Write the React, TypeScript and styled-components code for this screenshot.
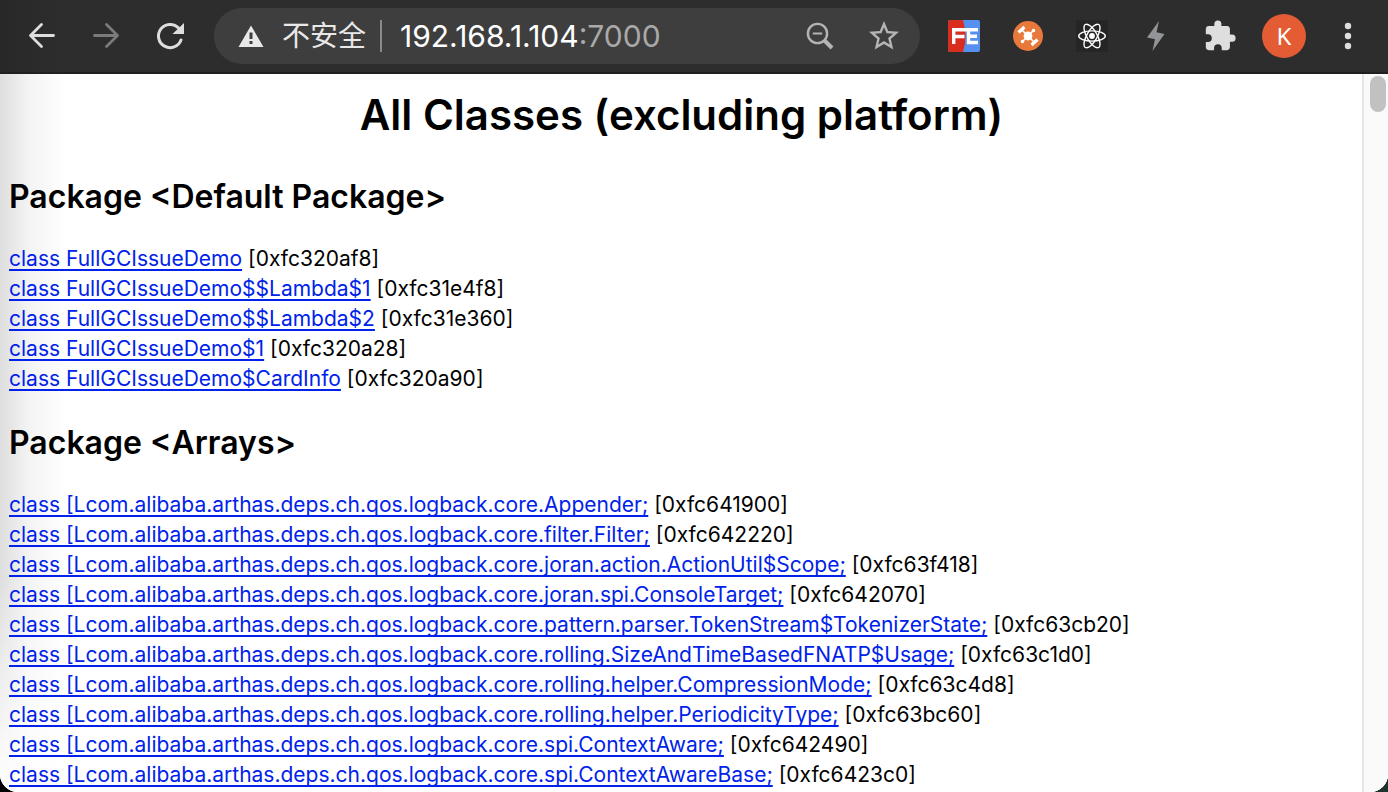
import React from "react";
import styled, { createGlobalStyle } from "styled-components";

const GlobalStyle = createGlobalStyle`
  *, *::before, *::after { box-sizing: border-box; }
  body {
    margin: 0;
    background: linear-gradient(to right, #000 50%, #1f332d 50%);
    font-family: Inter, "Noto Sans CJK SC", sans-serif;
  }
`;

const Window = styled.div`
  display: flex;
  flex-direction: column;
  height: 100vh;
  overflow: hidden;
  border-radius: 0 0 18px 18px;
  background: #fff;
`;

const Toolbar = styled.header`
  display: flex;
  align-items: center;
  flex: none;
  height: 74px;
  padding: 0 8px 0 10px;
  background: linear-gradient(to right, #282828, #2d2d2d 60px);
  border-bottom: 2px solid #202022;
`;

const IconButton = styled.button`
  display: flex;
  align-items: center;
  justify-content: center;
  flex: none;
  width: 64px;
  height: 56px;
  padding: 0;
  border: 0;
  background: none;
  color: ${(p) => p.color ?? "#dedede"};
  svg { display: block; }
`;

const AddressBar = styled.div`
  display: flex;
  align-items: center;
  flex: 1;
  min-width: 0;
  height: 56px;
  margin: 0 12px;
  padding: 0 4px 0 24px;
  border-radius: 28px;
  background: #3e3e3e;
  font-size: 28px;
  line-height: 40px;
  white-space: nowrap;
  color: #e8e8e8;
`;

const Security = styled.button`
  display: flex;
  align-items: center;
  gap: 18px;
  padding: 0;
  border: 0;
  background: none;
  color: inherit;
  font: inherit;
`;

const Divider = styled.span`
  width: 2px;
  height: 32px;
  margin: 0 18px 0 14px;
  background: #8a8a8a;
`;

const Url = styled.div`
  flex: 1;
  min-width: 0;
  overflow: hidden;
  font-size: 30px;
  color: #fff;
`;

const Port = styled.span`
  color: #a9a9a9;
`;

const Avatar = styled.span`
  display: flex;
  align-items: center;
  justify-content: center;
  width: 44px;
  height: 44px;
  border-radius: 50%;
  background: #e45c33;
  color: #fff;
  font: 24px/44px "Noto Sans", sans-serif;
`;

const Viewport = styled.div`
  display: flex;
  flex: 1;
  min-height: 0;
  background:
    linear-gradient(to bottom, transparent 70%, #fff),
    linear-gradient(to right, #dedede, #f3f3f3 28px, #fff 66px);
`;

const Page = styled.main`
  flex: 1;
  min-width: 0;
  overflow: hidden;
  padding: 10px 8px 0 9px;
  color: #000;
`;

const Title = styled.h1`
  margin: 0;
  font-size: 42px;
  font-weight: 600;
  line-height: 62px;
  padding-bottom: 2px;
  text-align: center;
`;

const PackageName = styled.h2`
  margin: 0;
  padding: 28px 0 26px;
  font-size: 32px;
  font-weight: 600;
  line-height: 42px;
`;

const ClassList = styled.ul`
  margin: 0;
  padding: 0;
  list-style: none;
  font-size: 21px;
  line-height: 30px;
  white-space: nowrap;
`;

const ClassLink = styled.a`
  color: #0022ea;
  text-decoration: underline;
  text-decoration-thickness: 2px;
  text-decoration-skip-ink: none;
  text-underline-offset: 3px;
`;

const ScrollTrack = styled.div`
  flex: none;
  width: 26px;
  padding: 2px 2px 0 6px;
  border-left: 2px solid #e6e6e6;
  background: #fafafa;
`;

const ScrollThumb = styled.div`
  height: 36px;
  border-radius: 8px;
  background: #c1c1c1;
`;

const BackIcon = () => (
  <svg width="32" height="32" viewBox="0 0 32 32" fill="none" stroke="currentColor" strokeWidth="2.8" strokeLinecap="round" strokeLinejoin="round">
    <path d="M27.500 15.500H4.500M15.500 4.500 4.500 15.500l11 11" />
  </svg>
);

const ForwardIcon = () => (
  <svg width="32" height="32" viewBox="0 0 32 32" fill="none" stroke="currentColor" strokeWidth="2.8" strokeLinecap="round" strokeLinejoin="round">
    <path d="M4.500 15.500h23M16.500 4.500l11 11-11 11" />
  </svg>
);

const ReloadIcon = () => (
  <svg width="32" height="32" viewBox="0 0 32 32">
    <path d="M27 20A11.600 11.600 0 1 1 24.500 8" fill="none" stroke="currentColor" strokeWidth="3" strokeLinecap="round" />
    <path d="M30 3v11H18.500z" fill="currentColor" />
  </svg>
);

const WarningIcon = () => (
  <svg width="26" height="32" viewBox="0 0 26 32">
    <path
      fillRule="evenodd"
      d="M13 5.500 25.500 27H.5zM11.500 12.500v6.500h3v-6.500zm0 8.500v3h3v-3z"
      fill="currentColor"
    />
  </svg>
);

const ZoomOutIcon = () => (
  <svg width="32" height="32" viewBox="0 0 32 32" fill="none" stroke="currentColor">
    <circle cx="13.500" cy="13.500" r="9.600" strokeWidth="2.400" />
    <path d="M8.800 13.500h9.400" strokeWidth="2" />
    <path d="m20 20 8 8" strokeWidth="4" />
  </svg>
);

const StarIcon = () => (
  <svg width="36" height="36" viewBox="0 0 24 24" fill="currentColor">
    <path d="M22 9.240l-7.190-.62L12 2 9.190 8.630 2 9.240l5.460 4.730L5.820 21 12 17.270 18.180 21l-1.630-7.030L22 9.240zM12 15.400l-3.760 2.270 1-4.280-3.320-2.880 4.380-.38L12 6.100l1.710 4.040 4.380.38-3.320 2.880 1 4.280L12 15.400z" />
  </svg>
);

const FeIcon = () => (
  <svg width="32" height="32" viewBox="0 0 32 32">
    <rect width="32" height="32" rx="2" fill="#5590ee" />
    <path d="M2 0h13q5 16 0 32H2q-2 0-2-2V2q0-2 2-2z" fill="#d92d20" />
    <path d="M5.700 24V9.700h11.800M5.700 16.500h10.800M30 9.700H17.500M20.500 9.700v12.800H30M20.500 16.300H29" fill="none" stroke="#fff" strokeWidth="3.400" />
  </svg>
);

const DroneIcon = () => (
  <svg width="32" height="32" viewBox="0 0 32 32">
    <circle cx="16" cy="16" r="15" fill="#e8793a" />
    <g stroke="#fff" fill="#fff">
      <path d="m9 9 14 14M22 10 10 22" strokeWidth="1.600" />
      <circle cx="16" cy="16" r="4.400" stroke="none" />
      <path d="m6.500 12.500 6-5.500M19.500 25l6-5.500" strokeWidth="3.200" />
      <circle cx="21.500" cy="10.500" r="1.800" stroke="none" />
      <circle cx="10.500" cy="21.500" r="1.800" stroke="none" />
    </g>
  </svg>
);

const AtomIcon = () => (
  <svg width="32" height="32" viewBox="0 0 32 32">
    <rect width="32" height="32" rx="2" fill="#252525" />
    <g fill="none" stroke="#fff" strokeWidth="1.400">
      <ellipse cx="16" cy="16" rx="13.300" ry="5.100" />
      <ellipse cx="16" cy="16" rx="13.300" ry="5.100" transform="rotate(60 16 16)" />
      <ellipse cx="16" cy="16" rx="13.300" ry="5.100" transform="rotate(120 16 16)" />
    </g>
    <circle cx="16" cy="16" r="2.900" fill="#fff" />
  </svg>
);

const BoltIcon = () => (
  <svg width="32" height="32" viewBox="0 0 32 32">
    <path d="M19 1 7 17.500l8 1.700L12.500 31 24.500 14l-8-1.700z" fill="currentColor" />
  </svg>
);

const PuzzleIcon = () => (
  <svg width="34" height="34" viewBox="0 0 24 24">
    <path
      fill="currentColor"
      d="M20.500 11H19V7c0-1.100-.9-2-2-2h-4V3.500a2.500 2.500 0 0 0-5 0V5H4c-1.100 0-2 .9-2 2v3.800h1.500a2.700 2.700 0 0 1 0 5.400H2V20c0 1.100.9 2 2 2h3.800v-1.500a2.700 2.700 0 0 1 5.400 0V22H17c1.100 0 2-.9 2-2v-4h1.500a2.500 2.500 0 0 0 0-5z"
    />
  </svg>
);

const MenuIcon = () => (
  <svg width="32" height="32" viewBox="0 0 32 32" fill="currentColor">
    <circle cx="16" cy="6" r="3.200" />
    <circle cx="16" cy="16" r="3.200" />
    <circle cx="16" cy="26" r="3.200" />
  </svg>
);

const LOGBACK = "[Lcom.alibaba.arthas.deps.ch.qos.logback.core.";

const packages = [
  {
    name: "Default Package",
    classes: [
      ["FullGCIssueDemo", "0xfc320af8"],
      ["FullGCIssueDemo$$Lambda$1", "0xfc31e4f8"],
      ["FullGCIssueDemo$$Lambda$2", "0xfc31e360"],
      ["FullGCIssueDemo$1", "0xfc320a28"],
      ["FullGCIssueDemo$CardInfo", "0xfc320a90"],
    ],
  },
  {
    name: "Arrays",
    classes: [
      [LOGBACK + "Appender;", "0xfc641900"],
      [LOGBACK + "filter.Filter;", "0xfc642220"],
      [LOGBACK + "joran.action.ActionUtil$Scope;", "0xfc63f418"],
      [LOGBACK + "joran.spi.ConsoleTarget;", "0xfc642070"],
      [LOGBACK + "pattern.parser.TokenStream$TokenizerState;", "0xfc63cb20"],
      [LOGBACK + "rolling.SizeAndTimeBasedFNATP$Usage;", "0xfc63c1d0"],
      [LOGBACK + "rolling.helper.CompressionMode;", "0xfc63c4d8"],
      [LOGBACK + "rolling.helper.PeriodicityType;", "0xfc63bc60"],
      [LOGBACK + "spi.ContextAware;", "0xfc642490"],
      [LOGBACK + "spi.ContextAwareBase;", "0xfc6423c0"],
    ],
  },
];

export default function App() {
  return (
    <>
      <GlobalStyle />
      <Window>
        <Toolbar>
          <IconButton aria-label="Back"><BackIcon /></IconButton>
          <IconButton aria-label="Forward" color="#7b7b7b"><ForwardIcon /></IconButton>
          <IconButton aria-label="Reload"><ReloadIcon /></IconButton>
          <AddressBar>
            <Security><WarningIcon />不安全</Security>
            <Divider />
            <Url>192.168.1.104<Port>:7000</Port></Url>
            <IconButton aria-label="Zoom" color="#b4b4b4"><ZoomOutIcon /></IconButton>
            <IconButton aria-label="Bookmark" color="#b4b4b4"><StarIcon /></IconButton>
          </AddressBar>
          <IconButton aria-label="FE helper"><FeIcon /></IconButton>
          <IconButton aria-label="Drone"><DroneIcon /></IconButton>
          <IconButton aria-label="React tools"><AtomIcon /></IconButton>
          <IconButton aria-label="Lightning" color="#929497"><BoltIcon /></IconButton>
          <IconButton aria-label="Extensions"><PuzzleIcon /></IconButton>
          <IconButton aria-label="Profile"><Avatar>K</Avatar></IconButton>
          <IconButton aria-label="Menu"><MenuIcon /></IconButton>
        </Toolbar>
        <Viewport>
          <Page>
            <Title>All Classes (excluding platform)</Title>
            {packages.map((pkg) => (
              <section key={pkg.name}>
                <PackageName>Package &lt;{pkg.name}&gt;</PackageName>
                <ClassList>
                  {pkg.classes.map(([name, address]) => (
                    <li key={address}>
                      <ClassLink href={"#" + address}>class {name}</ClassLink> [{address}]
                    </li>
                  ))}
                </ClassList>
              </section>
            ))}
          </Page>
          <ScrollTrack><ScrollThumb /></ScrollTrack>
        </Viewport>
      </Window>
    </>
  );
}
